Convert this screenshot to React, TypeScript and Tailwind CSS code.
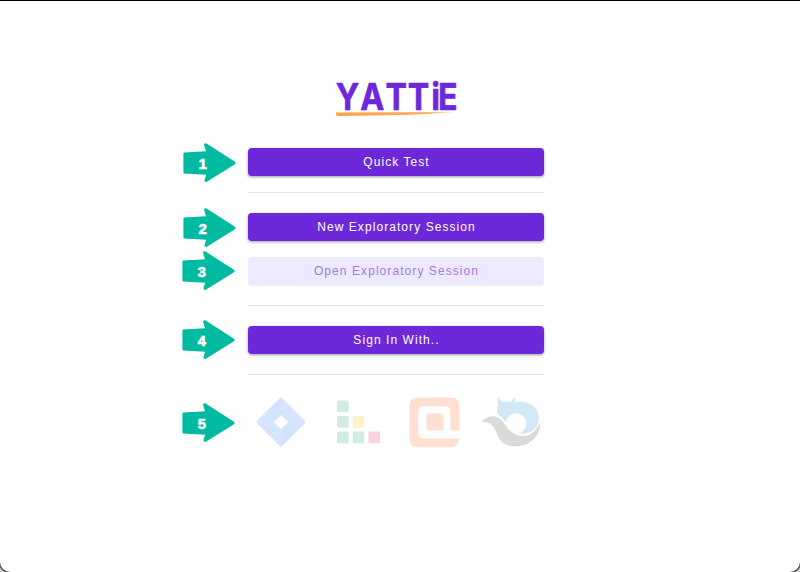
import type { ReactNode } from "react";

function Arrow({ n, shift = 0, rise = 0 }: { n: number; shift?: number; rise?: number }) {
  return (
    <svg width="56" height="42" viewBox="0 0 56 42" className="shrink-0" aria-label={`Step ${n}`}>
      <g transform={`translate(${shift - 0.6} ${-rise})`}>
        <path
          d="M2 11.5 L23.6 10.2 L21.6 3.8 Q22.2 1.8 24.2 2.6 L52.6 20.7 Q54.1 22 52.6 23.2 L24.4 40.8 Q21.8 41.3 22.1 38.7 L23.8 33.8 L1.8 32.6 Q1 32.4 1 31.4 L1 12.8 Q1 11.6 2 11.5Z"
          fill="#00bba2"
        />
        <text
          x="20.4"
          y="28"
          textAnchor="middle"
          fill="#fff"
          stroke="#fff"
          strokeWidth="0.7"
          className="font-['Liberation_Sans',sans-serif] text-[14.5px] font-bold"
        >
          {n}
        </text>
      </g>
    </svg>
  );
}

function Row({ n, shift, rise, children }: { n: number; shift?: number; rise?: number; children: ReactNode }) {
  return (
    <div className="flex h-10 items-center gap-[10px]">
      <Arrow n={n} shift={shift} rise={rise} />
      {children}
    </div>
  );
}

function Button({ label, disabled = false }: { label: string; disabled?: boolean }) {
  const look = disabled
    ? "bg-[#ede9fe] text-[#a47be6] shadow-[0_1px_2px_rgba(0,0,0,0.06)]"
    : "bg-[#6d28d9] text-white shadow-[0_1px_3px_rgba(0,0,0,0.4)]";
  return (
    <button
      disabled={disabled}
      className={`flex h-7 w-[296px] items-center justify-center rounded pl-px text-[12px] tracking-[1.07px] ${look}`}
    >
      {label}
    </button>
  );
}

function Divider({ className }: { className: string }) {
  return <div className={`ml-[66px] h-px w-[296px] bg-[#e2e2e5] ${className}`} />;
}

function Logo() {
  return (
    <svg width="124" height="40" viewBox="0 0 124 40" className="ml-[152px] overflow-visible">
      <defs>
        <linearGradient id="swoosh" x1="0" x2="1">
          <stop offset="0" stopColor="#ff9f45" />
          <stop offset="0.75" stopColor="#ffad60" />
          <stop offset="1" stopColor="#ffd5aa" />
        </linearGradient>
      </defs>
      <text
        transform="scale(0.86 1)"
        x="15.6 44.6 72.3 98.3 118.3 132.2"
        y="30.8"
        textAnchor="middle"
        fill="#6d28d9"
        stroke="#6d28d9"
        strokeWidth="0.6"
        className="font-[Inter,sans-serif] text-[37.5px] font-bold"
      >
        YATTiE
      </text>
      <path d="M2 33.4 L120.5 33 Q92 35.4 70 36 L4 36.9 Q2 36.9 2 35Z" fill="url(#swoosh)" />
    </svg>
  );
}

function Diamond() {
  return (
    <svg width="50" height="50" viewBox="0 0 50 50">
      <defs>
        <linearGradient id="upper" x1="1" y1="0.1" x2="0.2" y2="0.7">
          <stop offset="0" stopColor="#cfdffa" />
          <stop offset="1" stopColor="#d6e5ff" />
        </linearGradient>
        <linearGradient id="lower" x1="0" y1="0.9" x2="0.8" y2="0.3">
          <stop offset="0" stopColor="#cfdffa" />
          <stop offset="1" stopColor="#d6e5ff" />
        </linearGradient>
      </defs>
      <path d="M23.6 1.2 Q25 0 26.4 1.2 L48.8 23.6 Q50 25 48.8 26.4 L26.4 48.8 Q25 50 23.6 48.8 L1.2 26.4 Q0 25 1.2 23.6Z M25 17.7 L17.7 25 L25 32.3 L32.3 25Z" fill="#d6e5ff" fillRule="evenodd" />
      <path d="M25 1 Q19 9 25 17.7 L19 23.5 L8.5 17Z" fill="url(#upper)" />
      <path d="M25 49 Q31 41 25 32.3 L31 26.5 L41.5 33Z" fill="url(#lower)" />
    </svg>
  );
}

function Blocks() {
  return (
    <svg width="44" height="44" viewBox="0 0 44 44">
      <g fill="#d2ebe4">
        <rect x="0" y="0.5" width="11.7" height="11.7" rx="1.5" />
        <rect x="0" y="16" width="11.7" height="11.7" rx="1.5" />
        <rect x="0" y="31.5" width="11.7" height="11.7" rx="1.5" />
        <rect x="15.7" y="31.5" width="11.7" height="11.7" rx="1.5" />
      </g>
      <rect x="15.7" y="16" width="11.7" height="11.7" rx="1.5" fill="#fff1cd" />
      <rect x="31.4" y="31.5" width="11.7" height="11.7" rx="1.5" fill="#fad2e4" />
    </svg>
  );
}

function AtMark() {
  return (
    <svg width="51" height="51" viewBox="0 0 51 51" fill="#ffdfd2">
      <path
        fillRule="evenodd"
        d="M9 0.5 H42 Q50.5 0.5 50.5 9 V33.5 H41.5 V15 Q41.5 9.3 36 9.3 H15 Q9.3 9.3 9.3 15 V35.5 Q9.3 41.5 15 41.5 H50.5 Q49.5 50.3 41 50.3 H9 Q0.5 50.3 0.5 41.5 V9 Q0.5 0.5 9 0.5Z"
      />
      <path d="M20.5 16.5 H31.5 Q34.5 16.5 34.5 19.5 V30.5 Q34.5 33.5 31.5 33.5 H20.5 Q17.5 33.5 17.5 30.5 V19.5 Q17.5 16.5 20.5 16.5Z" />
    </svg>
  );
}

function Fox() {
  return (
    <svg width="60" height="50" viewBox="0 0 60 50">
      <path
        d="M15.8 -0.5 Q19.2 2 20.5 4.8 Q26.5 3.9 29.8 5 Q31.5 1 34.8 0.3 Q33.6 3.5 34 5.5 Q48 2.6 55.5 12.5 Q60.5 22 55 30 Q50 37.2 39 37 Q46 31 45.3 25 Q44 17.2 36 16.2 Q27 16.5 24.5 25 Q21 20 16.8 17.3 Q14.6 13 17 8.5 Q17.4 4.5 15.8 -0.5Z"
        fill="#d2e8f4"
      />
      <path
        d="M0.5 25.3 Q6 17.3 15.5 19.7 C25 24 25 35 37.5 38.5 Q52 42 59.2 25 Q60 38 48.5 45.5 Q37 52 25 47.5 C15 43 16 29.5 8 26 Q4.5 24.2 0.5 25.3Z"
        fill="#dadada"
      />
    </svg>
  );
}

export default function App() {
  return (
    <div className="h-[572px] w-[800px] bg-[#c8c8c8] font-['Liberation_Sans',Arial,sans-serif]">
      <main className="flex h-full flex-col rounded-b-[10px] border-t border-t-black bg-white pl-[182px] pt-[78px] shadow-[0_0_0_1px_#333]">
        <Logo />
        <div className="mt-[23px]">
          <Row n={1} shift={1}>
            <Button label="Quick Test" />
          </Row>
          <Divider className="mt-[10px]" />
        </div>
        <div className="mt-[14px]">
          <Row n={2} shift={1}>
            <Button label="New Exploratory Session" />
          </Row>
          <div className="mt-1">
            <Row n={3} rise={1}>
              <Button label="Open Exploratory Session" disabled />
            </Row>
          </div>
          <Divider className="mt-[14px]" />
        </div>
        <div className="mt-[14px]">
          <Row n={4} rise={1}>
            <Button label="Sign In With.." />
          </Row>
          <Divider className="mt-[14px]" />
        </div>
        <div className="mt-[27px]">
          <Row n={5}>
            <div className="flex w-[296px] items-center pl-2">
              <Diamond />
              <div className="ml-[31px]">
                <Blocks />
              </div>
              <div className="ml-[28px]">
                <AtMark />
              </div>
              <div className="ml-[21px]">
                <Fox />
              </div>
            </div>
          </Row>
        </div>
      </main>
    </div>
  );
}
